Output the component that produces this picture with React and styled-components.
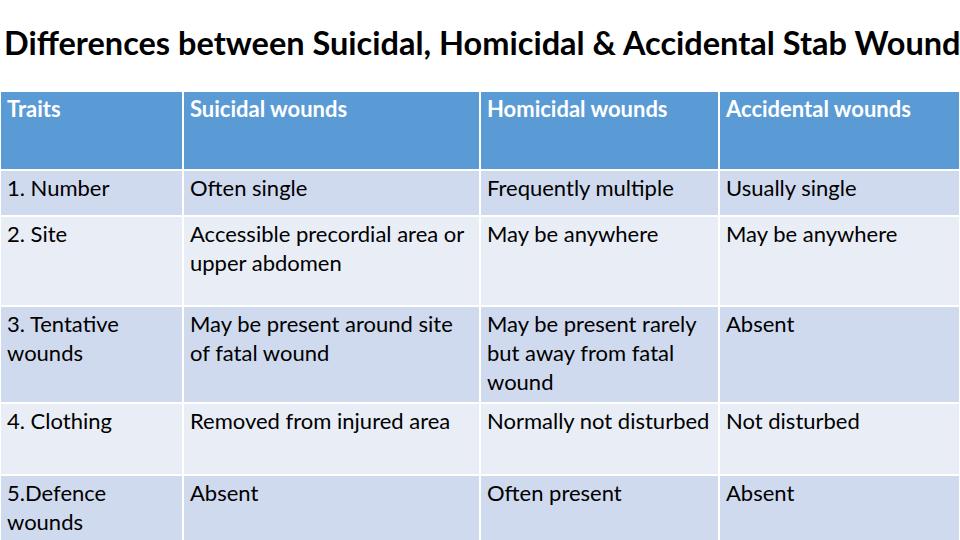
import React from "react";
import styled, { createGlobalStyle } from "styled-components";

const GlobalStyle = createGlobalStyle`
  html, body {
    margin: 0;
    padding: 0;
    background: #ffffff;
  }
  body {
    width: 960px;
    height: 540px;
    overflow: hidden;
  }
`;

const Slide = styled.div`
  width: 960px;
  height: 540px;
  display: flex;
  flex-direction: column;
  background: #ffffff;
  overflow: hidden;
`;

const Title = styled.h1`
  margin: 0;
  height: 92px;
  box-sizing: border-box;
  padding: 23px 0 0 4px;
  font-family: Lato, "Open Sans", sans-serif;
  font-weight: 700;
  font-size: 32.5px;
  line-height: 40px;
  color: #000000;
  white-space: nowrap;
`;

const Table = styled.div`
  display: grid;
  grid-template-columns: 181px 295px 237px 239px;
  grid-template-rows: 77px 44px 88px 95px 70px 64px;
  gap: 2px;
  padding-left: 1px;
  background: #ffffff;
`;

const Cell = styled.div`
  box-sizing: border-box;
  padding: 2px 4px 0 6px;
  font-family: Lato, "Open Sans", sans-serif;
  font-size: 22px;
  line-height: 29px;
  font-weight: ${(p) => (p.head ? 700 : 400)};
  color: ${(p) => (p.head ? "#ffffff" : "#000000")};
  background: ${(p) =>
    p.head ? "#5b9bd5" : p.shade === "dark" ? "#cfdaee" : "#e9edf6"};
`;

const header = ["Traits", "Suicidal wounds", "Homicidal wounds", "Accidental wounds"];

const rows = [
  ["1. Number", "Often single", "Frequently multiple", "Usually single"],
  ["2. Site", "Accessible precordial area or upper abdomen", "May be anywhere", "May be anywhere"],
  ["3. Tentative wounds", "May be present around site of fatal wound", "May be present rarely but away from fatal wound", "Absent"],
  ["4. Clothing", "Removed from injured area", "Normally not disturbed", "Not disturbed"],
  ["5.Defence wounds", "Absent", "Often present", "Absent"],
];

const App = () => (
  <>
    <GlobalStyle />
    <Slide>
      <Title>Differences between Suicidal, Homicidal &amp; Accidental Stab Wound</Title>
      <Table>
        {header.map((h) => (
          <Cell head key={h}>{h}</Cell>
        ))}
        {rows.map((row, i) =>
          row.map((text, j) => (
            <Cell key={`${i}-${j}`} shade={i % 2 === 0 ? "dark" : "light"}>
              {text}
            </Cell>
          ))
        )}
      </Table>
    </Slide>
  </>
);

export default App;
